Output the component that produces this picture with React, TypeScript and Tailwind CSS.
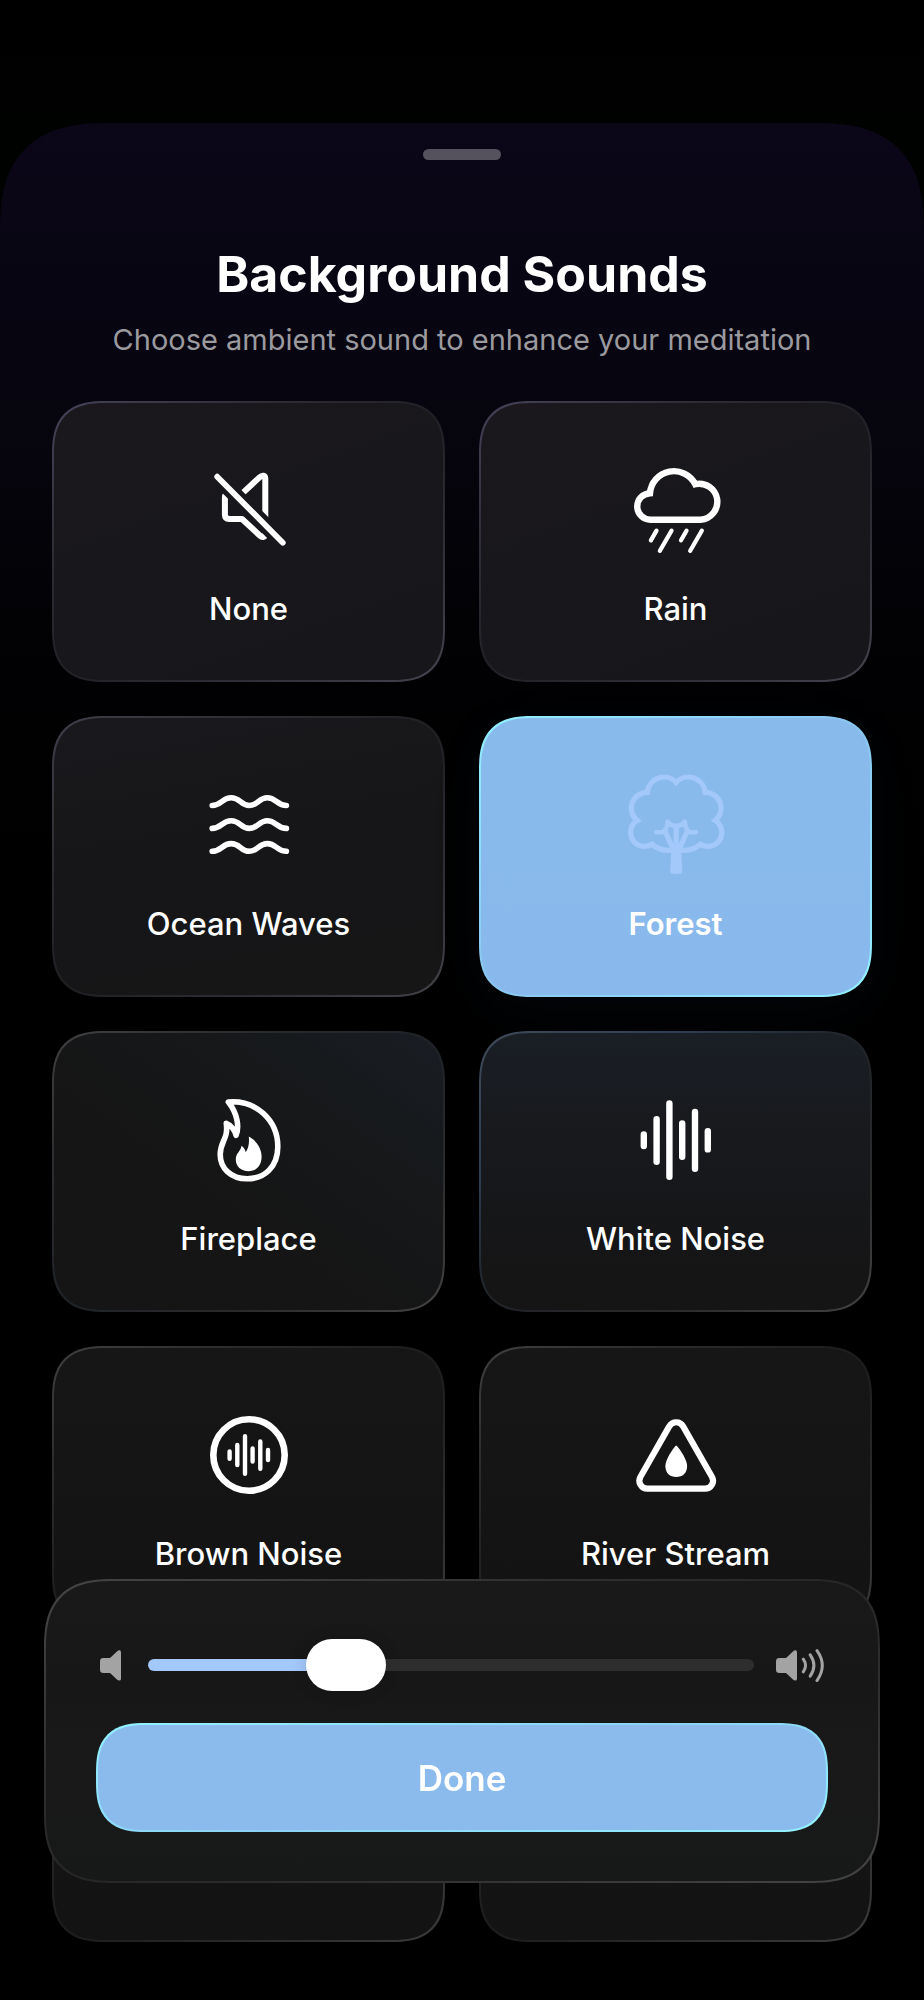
import { useState } from "react";
import type { ReactNode } from "react";

type Sound = {
    id: string;
    label: string;
    icon: ReactNode;
    surface: string;
};

// fill + diagonal hairline edge, one per lighting situation
const surfaces = {
    violet: "[background:linear-gradient(160deg,#1b181d,#18171b_45%,#17161a)_padding-box,linear-gradient(145deg,#46435a,#302e38_25%,#212026_50%,#302f37_75%,#45434e)_border-box]",
    dusk: "[background:linear-gradient(170deg,#19181c,#161618_50%,#161617)_padding-box,linear-gradient(145deg,#403e4a,#2e2d34_25%,#1f1f22_50%,#2e2d33_75%,#454349)_border-box]",
    ember: "[background:linear-gradient(215deg,#191d23,#16181a_30%,#151515_60%)_padding-box,linear-gradient(145deg,#414143,#2b2c2f_25%,#1e2227_50%,#2b2b2c_75%,#434344)_border-box]",
    glow: "[background:linear-gradient(180deg,#1a1f26,#181a1e_30%,#151516_85%)_padding-box,linear-gradient(145deg,#3f4a58,#2d3e52_25%,#1f2226_50%,#2b2b2c_75%,#434344)_border-box]",
    plain: "[background:linear-gradient(180deg,#161616,#131313)_padding-box,linear-gradient(145deg,#3f3f41,#2a2a2b_25%,#1c1c1c_50%,#2a2a2a_75%,#3b3b3b)_border-box]",
    selected:
        "[background:linear-gradient(180deg,#89baec,#89b9ec)_padding-box,linear-gradient(145deg,#93f2ff,#8edcfb_25%,#8ac4ee_50%,#8edcfb_75%,#93f2ff)_border-box] shadow-[0_14px_60px_rgba(60,110,190,0.05)]",
};

const Icon = ({ children, className = "text-white" }: { children: ReactNode; className?: string }) => (
    <svg
        viewBox="0 0 100 100"
        fill="none"
        stroke="currentColor"
        strokeLinecap="round"
        aria-hidden="true"
        className={`size-[100px] shrink-0 overflow-visible ${className}`}
    >
        {children}
    </svg>
);

const sounds: Sound[] = [
    {
        id: "none",
        label: "None",
        surface: surfaces.violet,
        icon: (
            <Icon>
                <mask id="slash-gap" maskUnits="userSpaceOnUse" x="0" y="0" width="100" height="100" stroke="none">
                    <rect width="100" height="100" fill="#fff" />
                    <path d="M10 8.5 92 91" stroke="#000" strokeWidth="15.6" />
                </mask>
                <path
                    mask="url(#slash-gap)"
                    strokeWidth="6"
                    strokeLinejoin="round"
                    d="M25.9 38V54.6Q25.9 59 30.2 59H43L60.5 75.2C63.5 78 66.3 77.5 66.3 73.5V19C66.3 15.2 63.5 14.6 60.5 17.4L43 33.6H30.2Q25.9 33.6 25.9 38Z"
                />
                <path d="M18.2 16.7 83.8 82.7" strokeWidth="5.8" />
            </Icon>
        ),
    },
    {
        id: "rain",
        label: "Rain",
        surface: surfaces.violet,
        icon: (
            <Icon>
                <path
                    strokeWidth="6.4"
                    d="M25 59.7A13.2 13.2 0 0 1 24 33.2A24 24 0 0 1 69.3 24.2A18 18 0 1 1 74.6 59.7Z"
                />
                <path
                    strokeWidth="4.3"
                    d="M30.5 70.7 24.9 80.3M45.5 70.7 33.9 90.8M60.5 70.7 55 80.3M75.8 70.7 64.2 90.8"
                />
            </Icon>
        ),
    },
    {
        id: "ocean",
        label: "Ocean Waves",
        surface: surfaces.dusk,
        icon: (
            <Icon>
                <g strokeWidth="5.6">
                    <path d="M13.2 30.5C22.5 30.5 23 22.8 32.2 22.8S41.5 30.5 50.3 30.5S59.5 22.8 68.3 22.8S78 30.5 87.4 30.5" />
                    <path d="M13.2 53.4C22.5 53.4 23 45.7 32.2 45.7S41.5 53.4 50.3 53.4S59.5 45.7 68.3 45.7S78 53.4 87.4 53.4" />
                    <path d="M13.2 76.3C22.5 76.3 23 68.6 32.2 68.6S41.5 76.3 50.3 76.3S59.5 68.6 68.3 68.6S78 76.3 87.4 76.3" />
                </g>
            </Icon>
        ),
    },
    {
        id: "forest",
        label: "Forest",
        surface: surfaces.selected,
        icon: (
            <Icon className="text-[#a3c8fa]">
                <g strokeWidth="5.3">
                    {/* canopy */}
                    <path d="M46 75.3Q34 76.5 26 69.3A13.9 13.9 0 1 1 11.2 45.5A15.8 15.8 0 0 1 21.2 17.4A16.8 16.8 0 0 1 50.2 7.4A16.8 16.8 0 0 1 79.2 17.4A15.8 15.8 0 0 1 89.2 45.5A13.9 13.9 0 1 1 74.4 69.3Q66.4 76.5 54.4 75.3" />
                    {/* branches */}
                    <path strokeWidth="4.6" strokeLinejoin="round" d="M30.4 57.3H36Q41 55 41.6 46.8Q45 51 50.2 51Q55.4 51 58.8 46.8Q59.4 55 64.4 57.3H70" />
                    <path d="M39 56 48.5 77M50.2 51V77M61.4 56 51.9 77" />
                </g>
                <path fill="currentColor" stroke="none" d="M45.4 73H55L56.4 96.5Q56.4 99 50.2 99T44.2 96.5Z" />
            </Icon>
        ),
    },
    {
        id: "fireplace",
        label: "Fireplace",
        surface: surfaces.ember,
        icon: (
            <Icon>
                <path
                    strokeWidth="5.6"
                    strokeLinejoin="round"
                    d="M29.4 12C57 9.5 78.8 30.5 78.8 56.5C78.8 76.5 66 88.8 48.2 88.8C32 88.8 21.2 78.5 21.2 64.5C21.2 51 29.5 49.5 27.3 33.3C32 35 36 40.5 37 45.3C40.5 37 38.5 23.5 29.4 12Z"
                />
                <path
                    fill="currentColor"
                    stroke="none"
                    d="M49.8 46.5C57.5 50.5 62.6 58.5 62.6 66.5C62.6 75.5 57.5 81.2 49.5 81.2C42 81.2 36.8 76.5 36.8 69.5C36.8 63 41.5 61.5 42.6 55.7C44.5 57 46.2 59.5 46.7 62.3C49.5 58.5 50.5 53 49.8 46.5Z"
                />
            </Icon>
        ),
    },
    {
        id: "white-noise",
        label: "White Noise",
        surface: surfaces.glow,
        icon: (
            <Icon>
                <path
                    strokeWidth="6.4"
                    d="M17.8 44.4V56M30.6 29.3V71.7M43.4 13.5V86.7M56.2 33.4V66.8M69 22V78.7M81.8 41.3V59.4"
                />
            </Icon>
        ),
    },
    {
        id: "brown-noise",
        label: "Brown Noise",
        surface: surfaces.plain,
        icon: (
            <Icon>
                <circle cx="50" cy="50" r="35.7" strokeWidth="6.6" />
                <path
                    strokeWidth="4.4"
                    d="M30.6 46.4V53.8M38.3 40V60M46 31.3V68.8M53.6 43.4V56.6M61.3 36.4V63.7M69 45V55"
                />
            </Icon>
        ),
    },
    {
        id: "river",
        label: "River Stream",
        surface: surfaces.plain,
        icon: (
            <Icon>
                <path
                    strokeWidth="6.2"
                    d="M43.2 21.4A8 8 0 0 1 57.2 21.4L85.9 71.7A8 8 0 0 1 79 83.7H21.4A8 8 0 0 1 14.5 71.7Z"
                />
                <path
                    fill="currentColor"
                    stroke="none"
                    d="M50.2 40.6C51.2 40.6 61.1 53.5 61.1 61.2C61.1 68 56.5 72 50.2 72S39.4 68 39.4 61.2C39.4 53.5 49.2 40.6 50.2 40.6Z"
                />
            </Icon>
        ),
    },
];

const SPEAKER = "M10 8 17.2 1.2C18.6-.2 21-.4 21 2.4V28.8C21 31 18.6 31 17.2 29.8L10 23H3.4Q0 23 0 19.8V11.4Q0 8 3.4 8Z";

const SoundCard = ({ sound, active, onSelect }: { sound: Sound; active: boolean; onSelect: () => void }) => (
    <button
        type="button"
        aria-pressed={active}
        onClick={onSelect}
        className={`flex h-[281px] flex-col items-center gap-[29px] rounded-[54px] border-2 border-transparent pt-[57px] [corner-shape:superellipse(1.4)] ${sound.surface}`}
    >
        {sound.icon}
        <span className={`text-[31px] leading-10 text-white ${active ? "font-semibold" : "font-medium"}`}>
            {sound.label}
        </span>
    </button>
);

const VolumePanel = () => {
    const [volume, setVolume] = useState(30);

    return (
        <div className="fixed inset-x-11 bottom-[117px] rounded-[70px] border-2 border-transparent px-[50px] pt-[58px] pb-[49px] [corner-shape:superellipse(1.4)] [background:linear-gradient(180deg,#191919,#171717_35%,#191919_60%,#171818)_padding-box,linear-gradient(160deg,#454545,#303030_30%,#262626_50%,#303030_70%,#454545)_border-box]">
            <div className="flex h-[52px] items-center px-1">
                <svg viewBox="0 0 21 31" className="h-[31px] w-[21px] shrink-0 fill-[#a3a3a3]" aria-hidden="true">
                    <path d={SPEAKER} />
                </svg>
                <input
                    type="range"
                    min={0}
                    max={100}
                    value={volume}
                    aria-label="Volume"
                    onChange={(e) => setVolume(Number(e.target.value))}
                    style={{
                        backgroundImage: `linear-gradient(to right, #a3c8fa ${volume}%, #2e2e2e ${volume}%)`,
                    }}
                    className="mr-[22px] ml-[27px] h-3 min-w-0 flex-1 appearance-none rounded-full [&::-webkit-slider-thumb]:h-[52px] [&::-webkit-slider-thumb]:w-20 [&::-webkit-slider-thumb]:appearance-none [&::-webkit-slider-thumb]:rounded-full [&::-webkit-slider-thumb]:bg-white [&::-webkit-slider-thumb]:shadow-[0_0_16px_rgba(0,0,0,0.15)]"
                />
                <svg viewBox="0 -1 48 33" className="h-[33px] w-12 shrink-0 fill-[#a3a3a3]" aria-hidden="true">
                    <path d={SPEAKER} />
                    <path
                        fill="none"
                        stroke="#a3a3a3"
                        strokeWidth="3"
                        strokeLinecap="round"
                        d="M27.3 9.2Q31.8 15.5 27.3 21.8M34.2 4.8Q41.6 15.5 34.2 26.2M41 .6Q51.6 15.5 41 30.6"
                    />
                </svg>
            </div>
            <button
                type="button"
                className="mt-8 flex h-[109px] w-full items-center justify-center rounded-[50px] border-2 border-transparent text-[35px] leading-10 font-semibold text-white [corner-shape:superellipse(1.4)] [background:linear-gradient(#8bbaed,#8bbaed)_padding-box,linear-gradient(165deg,#93f2ff,#8ee0fb_30%,#8ad2f4_50%,#8ee0fb_70%,#93f2ff)_border-box]"
            >
                Done
            </button>
        </div>
    );
};

const App = () => {
    const [selected, setSelected] = useState("forest");

    return (
        <div className="min-h-screen bg-black bg-linear-to-b from-black to-[#000200] to-[123px] pt-[123px] font-['Inter',sans-serif]">
            <main className="flex flex-col items-center rounded-t-[110px] bg-black bg-linear-to-b from-[#0b0618] via-[#06050d] via-[340px] to-black to-[900px] px-[52px] pt-[26px] pb-[58px] [corner-shape:superellipse(1.4)]">
                <div className="h-[11px] w-[78px] rounded-full bg-[#55515d]" />
                <h1 className="mt-[84px] text-center text-[50px] leading-[60px] font-bold text-white">Background Sounds</h1>
                <p className="mt-4 text-center text-[29px] leading-10 text-[#9b9a9f]">
                    Choose ambient sound to enhance your meditation
                </p>

                <div className="mt-[41px] grid w-full grid-cols-2 gap-[34px]">
                    {sounds.map((sound) => (
                        <SoundCard
                            key={sound.id}
                            sound={sound}
                            active={sound.id === selected}
                            onSelect={() => setSelected(sound.id)}
                        />
                    ))}
                    {/* last row, still tucked behind the volume panel */}
                    <div
                        className={`h-[281px] rounded-[54px] border-2 border-transparent [corner-shape:superellipse(1.4)] ${surfaces.plain}`}
                    />
                    <div
                        className={`h-[281px] rounded-[54px] border-2 border-transparent [corner-shape:superellipse(1.4)] ${surfaces.plain}`}
                    />
                </div>
            </main>

            <VolumePanel />
        </div>
    );
};

export default App;
